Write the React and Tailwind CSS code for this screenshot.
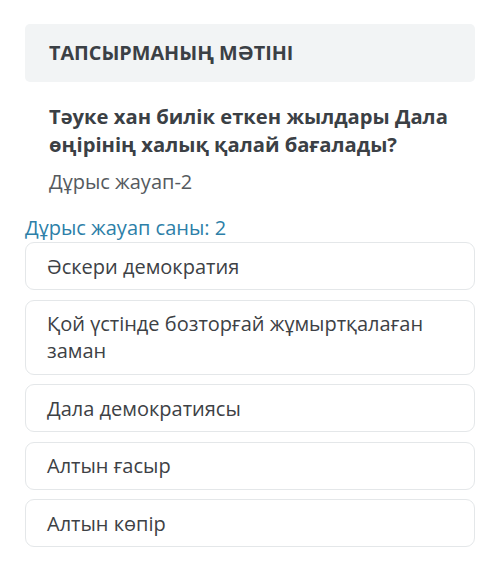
const options = [
  "Әскери демократия",
  "Қой үстінде бозторғай жұмыртқалаған заман",
  "Дала демократиясы",
  "Алтын ғасыр",
  "Алтын көпір",
];

export default function App() {
  return (
    <div className="min-h-screen bg-white px-[25px] pt-[24px] font-['Open_Sans',sans-serif]">
      {/* шапка блогы */}
      <div className="h-[58px] rounded-[5px] bg-[#f2f4f5] px-[24px] flex items-center">
        <h2 className="text-[19.8px] font-bold uppercase text-[#3b4045]">
          Тапсырманың мәтіні
        </h2>
      </div>

      <div className="px-[24px] pt-[20px]">
        <p className="text-[20.2px] leading-[28px] font-bold text-[#3b4045]">
          Тәуке хан билік еткен жылдары Дала өңірінің халық қалай бағалады?
        </p>
        <p className="mt-[11px] text-[20px] leading-[26px] text-[#555a5e]">Дұрыс жауап-2</p>
      </div>

      <p className="mt-[21px] text-[20px] leading-[24px] text-[#2d7fa8]">Дұрыс жауап саны: 2</p>

      {/* жауап нұсқалары */}
      <div className="mt-[2px] flex flex-col gap-[9.5px]">
        {options.map((text, i) => (
          <div
            key={i}
            className="rounded-[9px] border-[1.5px] border-[#e4e7e9] bg-white pl-[21px] pr-[16px] py-[9.5px] text-[20px] leading-[27px] text-[#3d4145]"
          >
            {text}
          </div>
        ))}
      </div>
    </div>
  );
}
